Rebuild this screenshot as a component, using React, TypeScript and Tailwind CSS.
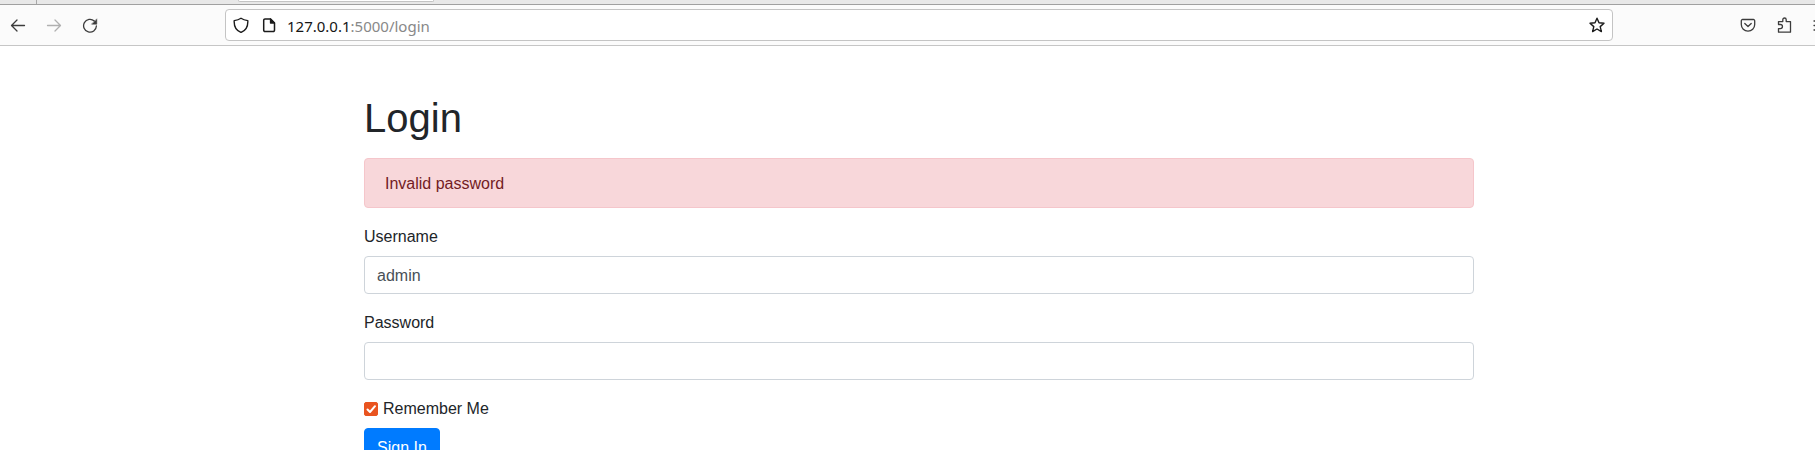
import { useState } from "react";
import type { ReactNode } from "react";

function Icon({ children, className = "" }: { children: ReactNode; className?: string }) {
  return (
    <svg
      viewBox="0 0 16 16"
      className={`size-4 shrink-0 ${className}`}
      fill="none"
      stroke="currentColor"
      strokeWidth="1.3"
      strokeLinecap="round"
      strokeLinejoin="round"
      aria-hidden="true"
    >
      {children}
    </svg>
  );
}

function ToolButton({ label, children, disabled }: { label: string; children: ReactNode; disabled?: boolean }) {
  return (
    <button
      type="button"
      aria-label={label}
      disabled={disabled}
      className="flex h-8 w-9 shrink-0 items-center justify-center text-[#3c3c3c] disabled:text-[#b0b0b0]"
    >
      {children}
    </button>
  );
}

function BrowserBar() {
  return (
    <header>
      <div className="flex h-[5px] border-b border-[#a0a0a0] bg-[#e8e8e8]">
        <div className="w-[37px] border-r border-[#a8a8a8]" />
        <div className="ml-[201px] h-[2px] w-[196px] rounded-b-sm border-x border-b border-[#c4c4c4] bg-white" />
      </div>
      <div className="flex h-[41px] items-center border-b border-[#c6c6c6] bg-[#fbfbfb]">
        <nav className="flex">
          <ToolButton label="Back">
            <Icon>
              <path d="M14.5 8.5H1.800M7 3L1.500 8.500L7 14" />
            </Icon>
          </ToolButton>
          <ToolButton label="Forward" disabled>
            <Icon>
              <path d="M1.500 8.500h12.700M9 3l5.500 5.500L9 14" />
            </Icon>
          </ToolButton>
          <ToolButton label="Reload">
            <Icon>
              <path d="M14.400 9A6.400 6.400 0 1 1 12.300 4" />
              <path d="M14.800 2.200v5h-5z" fill="currentColor" strokeWidth="0.5" />
            </Icon>
          </ToolButton>
        </nav>
        <div className="mx-[117px] flex h-8 min-w-0 flex-1 items-center rounded border border-[#c4c4c4] bg-white px-[7px] text-[#1b1b1b]">
          <Icon>
            <path d="M8 1.200C6 2.600 3.500 3.300 1.200 3.600C0.900 9 2.600 13.400 8 15.400C13.400 13.400 15.100 9 14.800 3.600C12.500 3.300 10 2.600 8 1.200Z" strokeWidth="1.400" />
          </Icon>
          <Icon className="ml-3">
            <path d="M9.500 2H4a1.300 1.300 0 0 0-1.300 1.300v9.900A1.300 1.300 0 0 0 4 14.500h8.200a1.300 1.300 0 0 0 1.300-1.300V6z" strokeWidth="1.500" />
            <path d="M9.500 2v4h4z" fill="currentColor" />
          </Icon>
          <div className="ml-[10px] flex-1 pt-px font-['Noto_Sans',sans-serif] text-[15px] leading-5 text-[#888]">
            <span className="text-[#151515]">127.0.0.1</span>:5000/login
          </div>
          <button type="button" aria-label="Bookmark this page">
            <Icon>
              <path d="M8 1.200l2 4.600 5 .500-3.800 3.300 1.200 5L8 12l-4.400 2.600 1.200-5L1 6.300l5-.500z" strokeWidth="1.400" />
            </Icon>
          </button>
        </div>
        <div className="flex">
          <ToolButton label="Save to Pocket">
            <Icon>
              <path d="M2.600 2.500h10.800a1.300 1.300 0 0 1 1.300 1.300v3.700a6.700 6.700 0 0 1-13.400 0V3.800a1.300 1.300 0 0 1 1.300-1.300zM4.800 6.500L8 9.500l3.200-3" />
            </Icon>
          </ToolButton>
          <ToolButton label="Extensions">
            <Icon>
              <path d="M2.500 7.500V4.600h4.300V2.700a1.700 1.700 0 0 1 3.400 0v1.900h4.300v10.600h-12v-3.600h1.900a2 2 0 0 0 0-4.100z" />
            </Icon>
          </ToolButton>
          <ToolButton label="Menu">
            <Icon>
              <path d="M2 4h12M2 8.500h12M2 13h12" />
            </Icon>
          </ToolButton>
        </div>
      </div>
    </header>
  );
}

const labelClass = "mb-[6px] block leading-[26px]";

const fieldClass =
  "block h-[38px] w-full rounded border border-[#ced4da] bg-white px-3 pt-0.5 text-base text-[#495057] outline-none focus:border-[#80bdff]";

function LoginForm() {
  const [username, setUsername] = useState("admin");
  const [password, setPassword] = useState("");
  const [remember, setRemember] = useState(true);

  return (
    <main className="mx-auto max-w-[1110px] pt-12 text-base text-[#212529]">
      <h1 className="mb-4 text-[40px] leading-[48px] font-medium">Login</h1>
      <div role="alert" className="mb-4 rounded border border-[#f5c6cb] bg-[#f8d7da] px-5 pt-[13px] pb-[11px] text-[#721c24]">
        Invalid password
      </div>
      <form onSubmit={(e) => e.preventDefault()}>
        <div className="mb-4">
          <label htmlFor="username" className={labelClass}>Username</label>
          <input id="username" type="text" className={fieldClass} value={username} onChange={(e) => setUsername(e.target.value)} />
        </div>
        <div className="mb-4">
          <label htmlFor="password" className={labelClass}>Password</label>
          <input id="password" type="password" className={fieldClass} value={password} onChange={(e) => setPassword(e.target.value)} />
        </div>
        <div className="mb-[6px] flex items-center gap-[5px] leading-[26px]">
          <span className="grid size-[14px] place-items-center">
            <input
              id="remember"
              type="checkbox"
              checked={remember}
              onChange={(e) => setRemember(e.target.checked)}
              className="col-start-1 row-start-1 size-[14px] appearance-none rounded-xs border border-[#8f8f9d] checked:border-[#e95420] checked:bg-[#e95420]"
            />
            {remember && (
              <svg viewBox="0 0 14 14" className="pointer-events-none col-start-1 row-start-1 size-[14px]" fill="none" stroke="white" strokeWidth="2" strokeLinecap="round" strokeLinejoin="round" aria-hidden="true">
                <path d="M3.500 7.500L6 10l5-5.800" />
              </svg>
            )}
          </span>
          <label htmlFor="remember">Remember Me</label>
        </div>
        <button type="submit" className="h-[38px] rounded border border-[#007bff] bg-[#007bff] px-3 pt-0.5 text-white">
          Sign In
        </button>
      </form>
    </main>
  );
}

export default function App() {
  return (
    <div className="h-screen overflow-hidden bg-white font-['Liberation_Sans',Arial,sans-serif]">
      <div className="-mr-[23px]">
        <BrowserBar />
        <LoginForm />
      </div>
    </div>
  );
}
